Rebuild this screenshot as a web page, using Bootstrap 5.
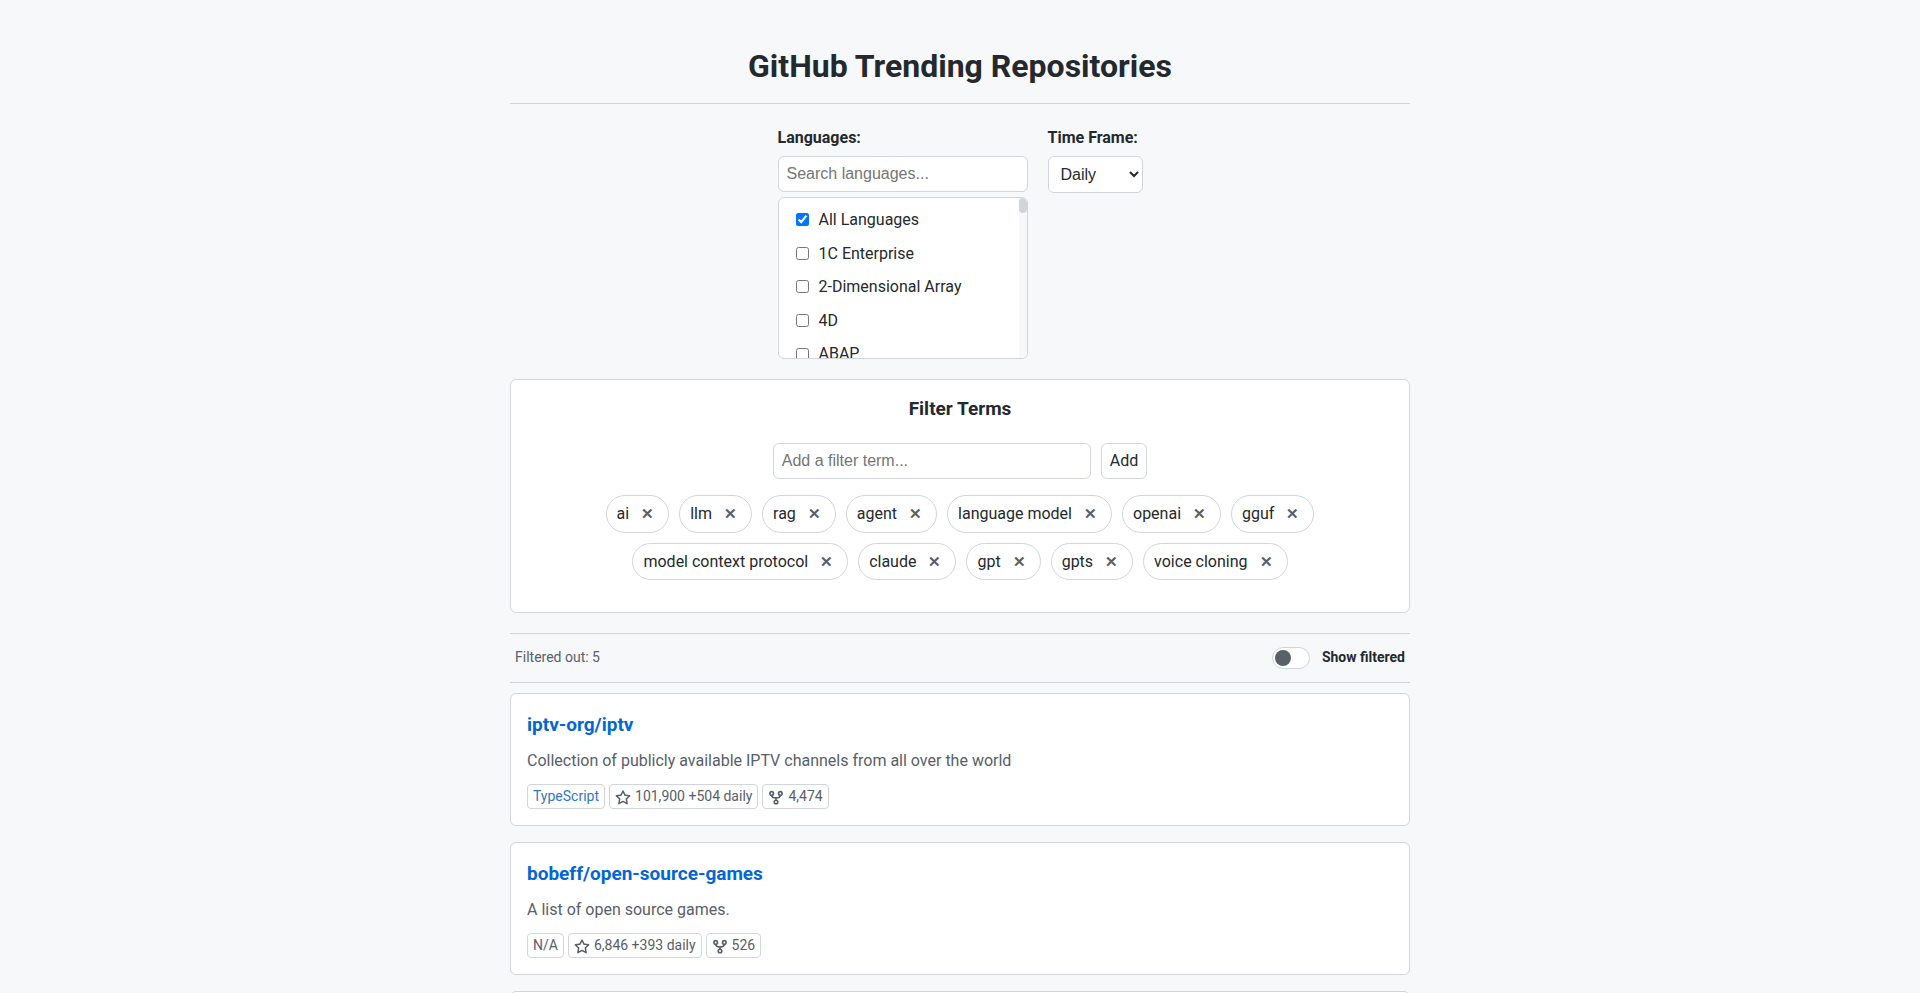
<!DOCTYPE html>
<html lang="en">
<head>
<meta charset="utf-8">
<meta name="viewport" content="width=device-width, initial-scale=1">
<title>GitHub Trending Repositories</title>
<link href="https://cdn.jsdelivr.net/npm/bootstrap@5.3.0/dist/css/bootstrap.min.css" rel="stylesheet">
<style>
:root { --line: #d1d5da; --ink: #24292e; --soft: #586069; --accent: #0366d6; --page: #f6f8fa; }
body { font-family: Roboto, sans-serif; font-size: 16px; line-height: 1.6; color: var(--ink); background: var(--page); }
.page-wrap { max-width: 940px; padding: 41px 20px; }
.page-title { font-size: 32px; line-height: 51px; font-weight: 700; padding-bottom: 11px; border-bottom: 1px solid var(--line); margin-bottom: 20px; }
.controls { gap: 20px; }
.field-label { font-weight: 700; margin-bottom: 5px; line-height: 27px; }
.field { font-family: "Liberation Sans", sans-serif; font-size: 16px; line-height: 18px; height: 36px; padding: 8px; color: var(--ink); background: #fff; border: 1px solid var(--line); border-radius: 6px; }
.field::placeholder { color: #757575; }
.lang-search { width: 250px; }
.time-select { height: 37px; width: 95px; }
.term-input { width: 318px; max-width: 100%; }
.lang-box { width: 250px; height: 162px; margin-top: 5px; background: #fff; border: 1px solid var(--line); border-radius: 6px; overflow: hidden; }
.lang-list { padding: 5px; overflow-y: auto; scrollbar-width: none; }
.lang-list label { padding: 4px 12px; }
.lang-list input { width: 13px; height: 13px; margin: 0 10px 0 0; flex: none; }
.lang-track { width: 8px; background: var(--page); }
.lang-thumb { height: 15px; background: var(--line); border-radius: 4px; }
.panel { background: #fff; border: 1px solid var(--line); border-radius: 6px; padding: 16px; }
.panel-title { font-size: 19px; line-height: 28px; font-weight: 700; margin: 0; }
.terms-panel { margin: 20px 0; padding: 15px 16px 32px; }
.term-form { gap: 10px; margin: 20px 0 16px; }
.add-btn { font-size: 16px; line-height: 18px; height: 36px; padding: 8px; color: var(--ink); background: #fff; border: 1px solid var(--line); border-radius: 6px; }
.terms { gap: 10px; }
.term { padding: 5px 10px; border: 1px solid var(--line); border-radius: 20px; }
.term button { border: 0; background: none; color: var(--soft); font-size: 15px; line-height: 18px; font-weight: 700; padding: 0 4px; margin-left: 8px; }
.status-bar { border-top: 1px solid var(--line); border-bottom: 1px solid var(--line); height: 50px; padding: 0 5px 2px; margin-bottom: 10px; font-size: 14px; }
.status-bar .count { color: var(--soft); }
.toggle { appearance: none; width: 38px; height: 22px; margin: 2px 12px 0 0; padding: 2px; border: 1px solid var(--line); border-radius: 11px; background: #fff; }
.toggle::before { content: ""; display: block; width: 16px; height: 16px; border-radius: 50%; background: var(--soft); }
.toggle:checked::before { margin-left: auto; background: var(--accent); }
.repo { margin-bottom: 16px; }
.repo .panel-title { line-height: 30px; }
.repo a { color: var(--accent); text-decoration: none; }
.repo p { color: var(--soft); line-height: 26px; margin: 8px 0 10px; }
.fact { display: inline-flex; align-items: center; gap: 4px; height: 25px; padding: 0 5px; font-size: 14px; line-height: 23px; color: var(--soft); border: 1px solid var(--line); border-radius: 4px; }
.fact svg { width: 16px; height: 16px; fill: currentColor; margin-top: 2px; }
.fact.ts { color: #3178c6; }
</style>
</head>
<body>
<svg class="d-none" xmlns="http://www.w3.org/2000/svg">
<symbol id="star" viewBox="0 0 16 16"><path d="M8 .25a.75.75 0 0 1 .673.418l1.882 3.815 4.21.612a.75.75 0 0 1 .416 1.279l-3.046 2.97.719 4.192a.751.751 0 0 1-1.088.791L8 12.347l-3.766 1.98a.75.75 0 0 1-1.088-.79l.72-4.194L.818 6.374a.75.75 0 0 1 .416-1.28l4.21-.611L7.327.668A.75.75 0 0 1 8 .25Zm0 2.445L6.615 5.5a.75.75 0 0 1-.564.41l-3.097.45 2.24 2.184a.75.75 0 0 1 .216.664l-.528 3.084 2.769-1.456a.75.75 0 0 1 .698 0l2.77 1.456-.53-3.084a.75.75 0 0 1 .216-.664l2.24-2.183-3.096-.45a.75.75 0 0 1-.564-.41L8 2.694Z"/></symbol>
<symbol id="fork" viewBox="0 0 16 16"><g fill="none" stroke="currentColor" stroke-width="1.6"><circle cx="3.7" cy="3.4" r="1.8"/><circle cx="12.3" cy="3.4" r="1.800"/><circle cx="8" cy="12" r="1.8"/><path d="M3.700 5.200C3.700 7.200 5.500 7.900 8 7.900s4.300-.7 4.300-2.700M8 7.900V10.200"/></g></symbol>
</svg>
<div class="container-fluid page-wrap">
  <h1 class="page-title text-center">GitHub Trending Repositories</h1>

  <form class="controls d-flex flex-wrap justify-content-center align-items-start">
    <div class="d-flex flex-column">
      <label class="field-label" for="langSearch">Languages:</label>
      <input class="field lang-search" id="langSearch" type="text" placeholder="Search languages...">
      <div class="lang-box d-flex">
        <div class="lang-list flex-grow-1" id="langList"></div>
        <div class="lang-track"><div class="lang-thumb"></div></div>
      </div>
    </div>
    <div class="d-flex flex-column">
      <label class="field-label" for="timeFrame">Time Frame:</label>
      <select class="field time-select" id="timeFrame"><option>Daily</option><option>Weekly</option><option>Monthly</option></select>
    </div>
  </form>

  <section class="panel terms-panel">
    <h2 class="panel-title text-center">Filter Terms</h2>
    <form class="term-form d-flex justify-content-center">
      <input class="field term-input" type="text" aria-label="Filter term" placeholder="Add a filter term...">
      <button class="add-btn" type="button">Add</button>
    </form>
    <div class="terms d-flex flex-wrap justify-content-center" id="terms"></div>
  </section>

  <div class="status-bar d-flex justify-content-between align-items-center">
    <span class="count">Filtered out: 5</span>
    <span class="d-flex align-items-center">
      <input class="toggle" id="showFiltered" type="checkbox">
      <label class="fw-bold" for="showFiltered">Show filtered</label>
    </span>
  </div>

  <article class="panel repo">
    <h3 class="panel-title"><a href="#">iptv-org/iptv</a></h3>
    <p>Collection of publicly available IPTV channels from all over the world</p>
    <div class="d-flex flex-wrap gap-1">
      <span class="fact ts">TypeScript</span>
      <span class="fact"><svg><use href="#star"/></svg>101,900 +504 daily</span>
      <span class="fact"><svg><use href="#fork"/></svg>4,474</span>
    </div>
  </article>
  <article class="panel repo">
    <h3 class="panel-title"><a href="#">bobeff/open-source-games</a></h3>
    <p>A list of open source games.</p>
    <div class="d-flex flex-wrap gap-1">
      <span class="fact">N/A</span>
      <span class="fact"><svg><use href="#star"/></svg>6,846 +393 daily</span>
      <span class="fact"><svg><use href="#fork"/></svg>526</span>
    </div>
  </article>
  <article class="panel repo"></article>
</div>
<script src="https://cdn.jsdelivr.net/npm/bootstrap@5.3.0/dist/js/bootstrap.bundle.min.js"></script>
<script>
const languages = ["All Languages", "1C Enterprise", "2-Dimensional Array", "4D", "ABAP"];
document.getElementById("langList").innerHTML = languages.map((name, i) =>
  `<label class="d-flex align-items-center"><input type="checkbox"${i ? "" : " checked"}>${name}</label>`).join("");
const terms = ["ai", "llm", "rag", "agent", "language model", "openai", "gguf", "model context protocol", "claude", "gpt", "gpts", "voice cloning"];
document.getElementById("terms").innerHTML = terms.map(t =>
  `<span class="term">${t}<button type="button" aria-label="Remove ${t}">✕</button></span>`).join("");
</script>
</body>
</html>
